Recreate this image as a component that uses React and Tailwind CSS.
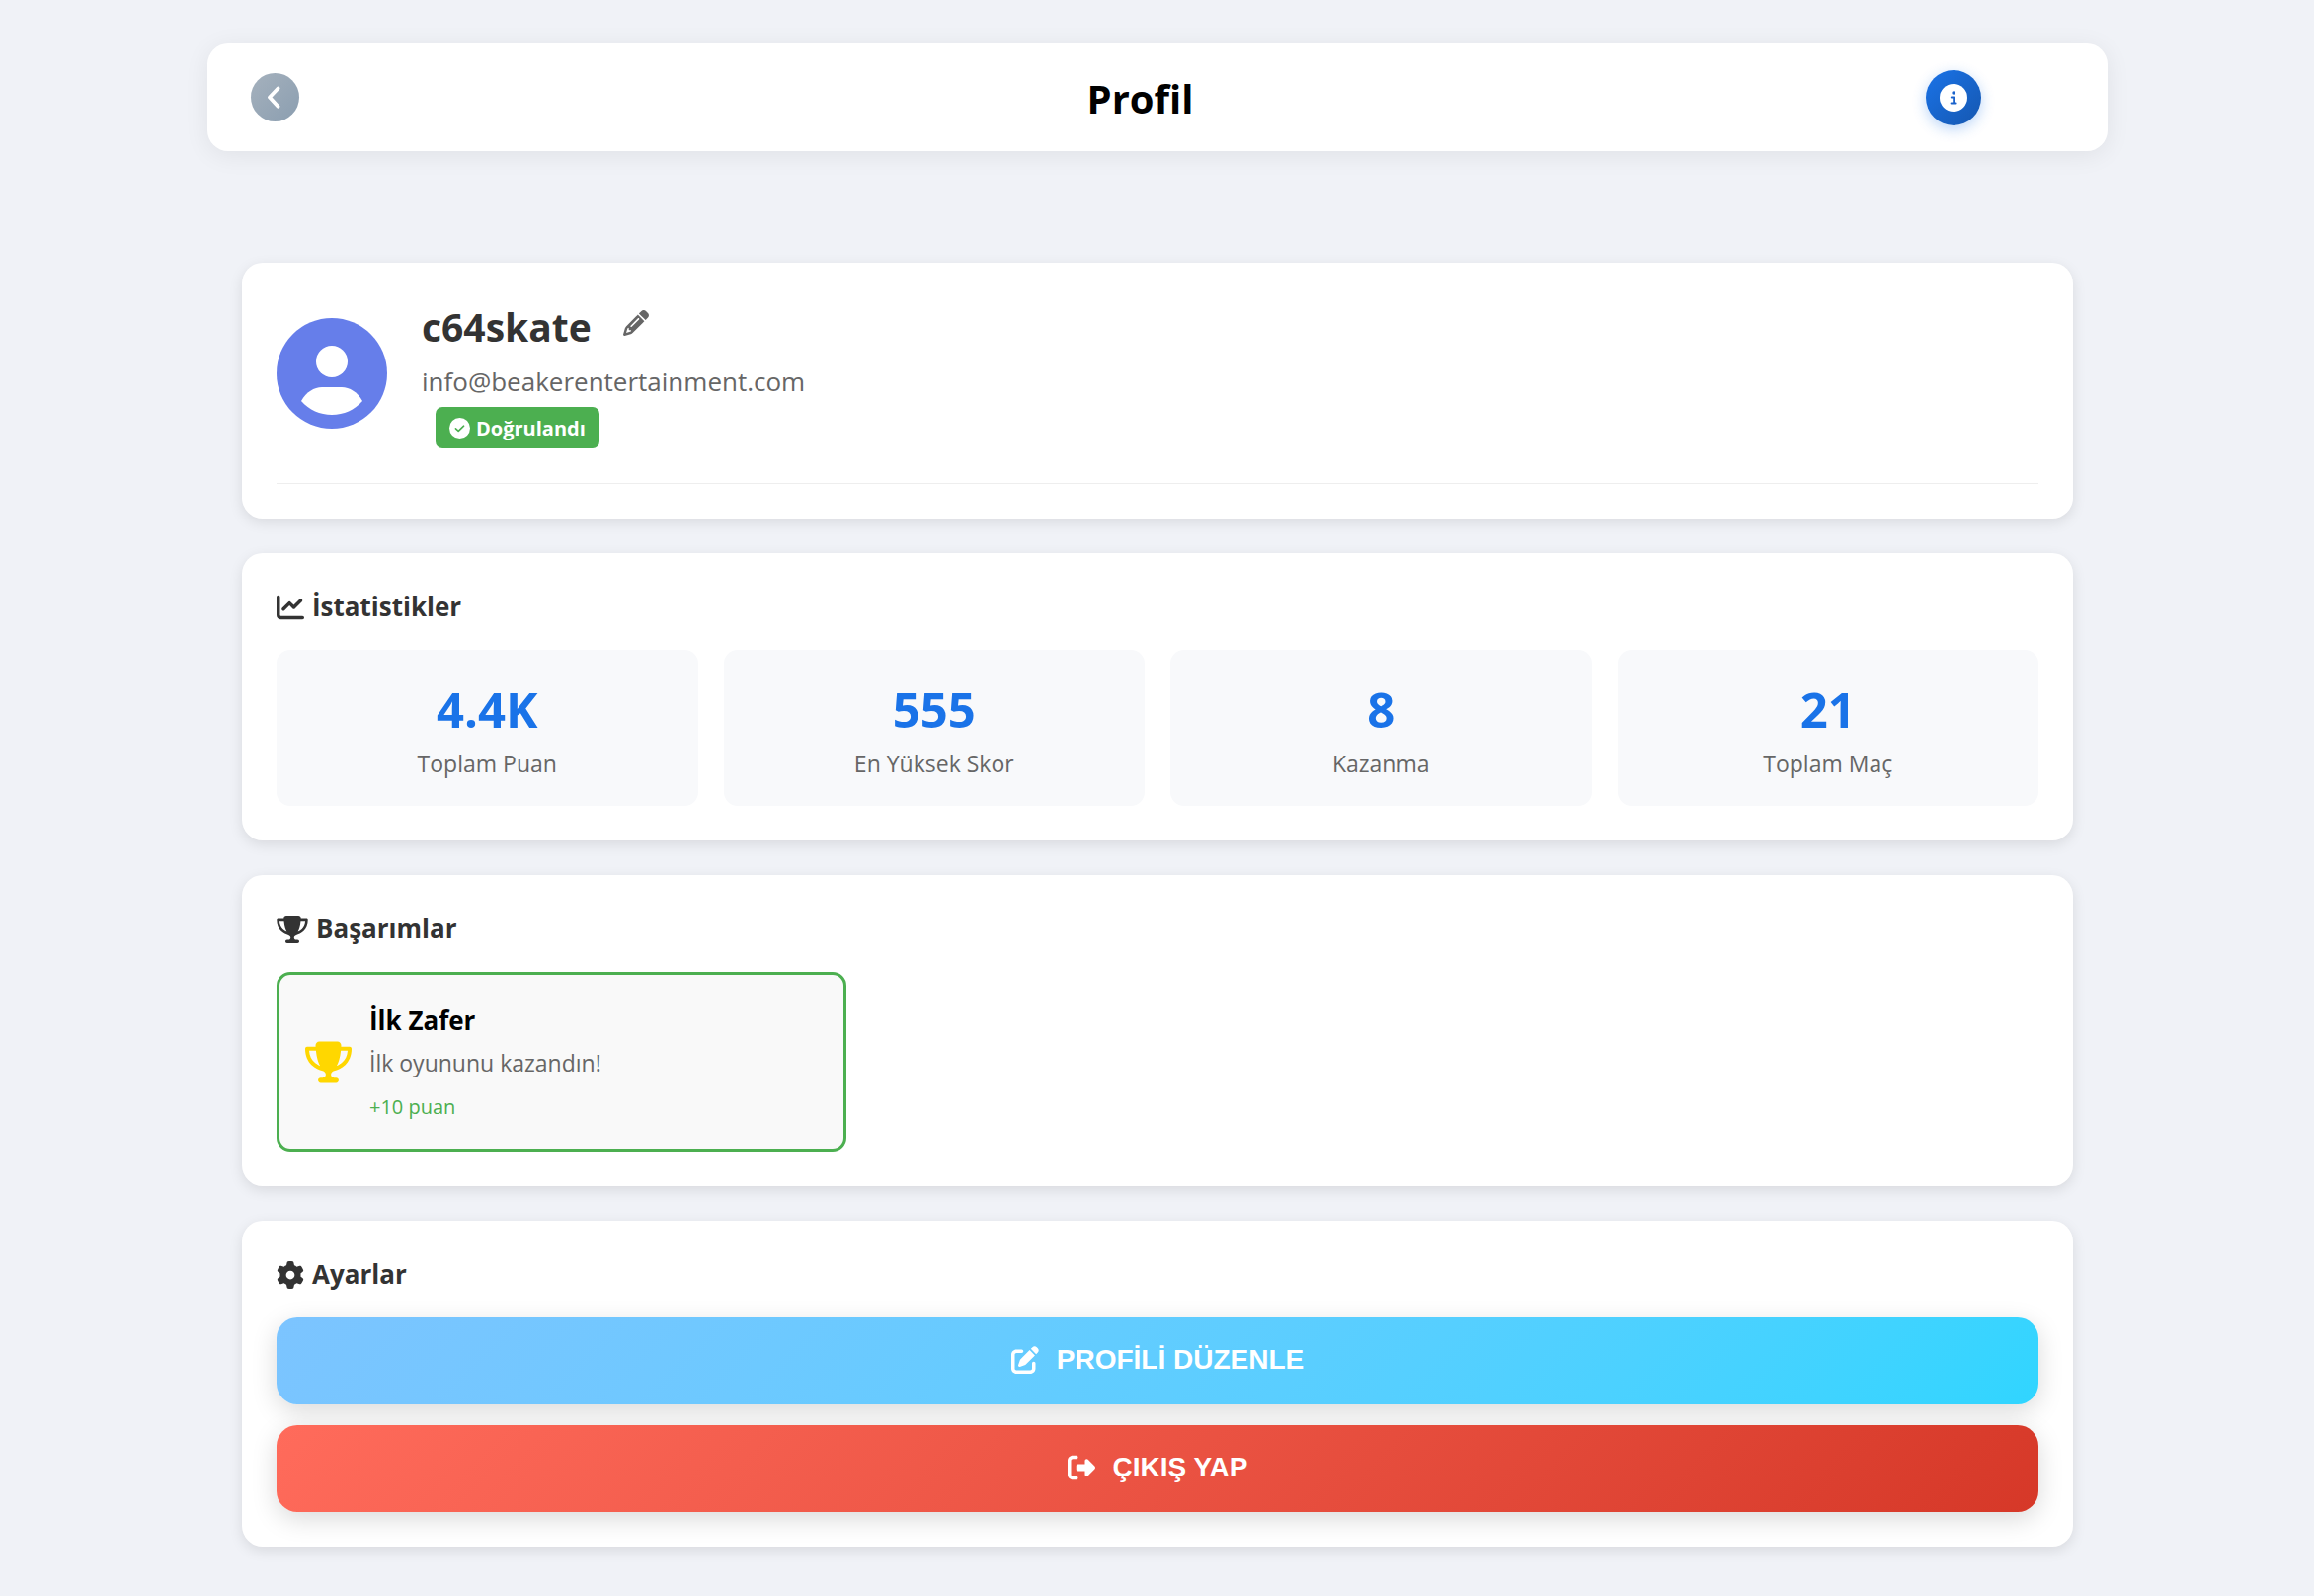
import {
  FaPencil,
  FaChartLine,
  FaTrophy,
  FaGear,
  FaPenToSquare,
  FaRightFromBracket,
} from 'react-icons/fa6';

const stats = [
  { value: '4.4K', label: 'Toplam Puan' },
  { value: '555', label: 'En Yüksek Skor' },
  { value: '8', label: 'Kazanma' },
  { value: '21', label: 'Toplam Maç' },
];

const achievements = [
  { id: 1, title: 'İlk Zafer', text: 'İlk oyununu kazandın!', points: '+10 puan' },
];

function Card({ children }) {
  return (
    <section className="rounded-[21px] bg-white p-[35px] shadow-[0_4px_14px_rgba(0,0,0,0.1)]">
      {children}
    </section>
  );
}

function CardTitle({ icon: Icon, iconWidth = 'w-7', children }) {
  return (
    <h2 className="mb-6 flex h-[39px] items-center gap-2 text-[26px] font-bold text-[#333]">
      <Icon className={`h-7 shrink-0 ${iconWidth}`} />
      <span>{children}</span>
    </h2>
  );
}

function BackIcon() {
  return (
    <svg viewBox="0 0 16 24" className="h-6 w-4" fill="none" stroke="currentColor" strokeWidth="3.8" strokeLinecap="round" strokeLinejoin="round" aria-hidden="true">
      <path d="M11.5 2.5 3 11.5 11.5 20.8" />
    </svg>
  );
}

function InfoIcon() {
  return (
    <svg viewBox="0 0 28 28" className="size-7" fill="none" aria-hidden="true">
      <circle cx="14" cy="14" r="14" fill="#fff" />
      <circle cx="14" cy="9" r="1.7" fill="#1a62cc" />
      <path d="M11.8 13.6h2.4v5.8M11.6 19.6h5" stroke="#1a62cc" strokeWidth="2" strokeLinecap="round" strokeLinejoin="round" />
    </svg>
  );
}

function CheckIcon() {
  return (
    <svg viewBox="0 0 21 21" className="size-[21px] shrink-0" fill="none" aria-hidden="true">
      <circle cx="10.5" cy="10.5" r="10.5" fill="#fff" />
      <path d="M6.4 10.8 9.2 13.4 14.6 8.2" stroke="#4caf50" strokeWidth="1.6" strokeLinecap="round" strokeLinejoin="round" />
    </svg>
  );
}

function Avatar() {
  return (
    <svg viewBox="0 0 112 112" className="size-28 shrink-0" aria-hidden="true">
      <circle cx="56" cy="56" r="56" fill="#667eea" />
      <circle cx="56" cy="44" r="16" fill="#fff" />
      <path d="M25 84C30 75 38 70 46 70H66C74 70 82 75 87 84C79 93 68 98 56 98S33 93 25 84Z" fill="#fff" />
    </svg>
  );
}

export default function App() {
  return (
    <div className="min-h-screen bg-[#f0f2f7] pt-11 pr-[209px] pb-12 pl-[210px] font-['Open_Sans','Noto_Sans',sans-serif]">
      {/* Header */}
      <header className="flex h-[109px] items-center justify-between rounded-[21px] bg-white px-11 shadow-[0_4px_26px_rgba(0,0,0,0.07)]">
        <div className="w-[105px]">
          <button
            type="button"
            aria-label="Geri"
            className="flex size-[49px] items-center justify-center rounded-full bg-linear-135 from-[#a5b1bd] to-[#8b9eb0] pr-0.5 text-white"
          >
            <BackIcon />
          </button>
        </div>
        <h1 className="pt-0.5 text-[40px] font-bold text-black">Profil</h1>
        <div className="w-[140px]">
          <button
            type="button"
            aria-label="Bilgi"
            className="flex size-14 items-center justify-center rounded-full bg-linear-135 from-[#1a73e8] to-[#1557b0] text-white shadow-[0_4px_14px_rgba(26,115,232,0.3)]"
          >
            <InfoIcon />
          </button>
        </div>
      </header>

      <main className="mt-[113px] flex flex-col gap-[35px] px-[35px]">
        {/* User */}
        <Card>
          <div className="flex items-center gap-[35px] border-b border-[#eee] pb-[35px]">
            <Avatar />
            <div className="flex flex-col items-start">
              <div className="flex h-[60px] items-center gap-8">
                <h2 className="text-[39px] font-bold text-[#333]">c64skate</h2>
                <button type="button" aria-label="Kullanıcı adını düzenle" className="mb-2 text-[#666]">
                  <FaPencil size={26} />
                </button>
              </div>
              <p className="text-[26px] leading-[50px] text-[#666]">info@beakerentertainment.com</p>
              <span className="mt-px ml-[14px] flex h-[42px] items-center gap-[6px] rounded-[7px] bg-[#4caf50] px-[14px] text-[20px] font-bold text-white">
                <CheckIcon />
                <span className="pt-0.5">Doğrulandı</span>
              </span>
            </div>
          </div>
        </Card>

        {/* Stats */}
        <Card>
          <CardTitle icon={FaChartLine}>İstatistikler</CardTitle>
          <div className="grid grid-cols-4 gap-[26px]">
            {stats.map(s => (
              <div key={s.label} className="flex h-[158px] flex-col items-center justify-center rounded-[14px] bg-[#f8f9fb] pt-2">
                <div className="text-[49px] leading-[64px] font-bold text-[#1a73e8]">{s.value}</div>
                <div className="text-[23px] leading-[46px] text-[#666]">{s.label}</div>
              </div>
            ))}
          </div>
        </Card>

        {/* Achievements */}
        <Card>
          <CardTitle icon={FaTrophy} iconWidth="w-8">Başarımlar</CardTitle>
          <div className="grid grid-cols-3 gap-[26px]">
            {achievements.map(a => (
              <div key={a.id} className="flex h-[182px] items-center gap-[18px] rounded-[14px] border-3 border-[#4caf50] bg-[#f9f9f9] px-[26px]">
                <FaTrophy size={47} className="shrink-0 text-[#ffd700]" />
                <div className="pt-1.5">
                  <h3 className="text-[26px] leading-[44px] font-bold text-black">{a.title}</h3>
                  <p className="text-[23px] leading-[42px] text-[#666]">{a.text}</p>
                  <p className="text-[20px] leading-[48px] text-[#4caf50]">{a.points}</p>
                </div>
              </div>
            ))}
          </div>
        </Card>

        {/* Settings */}
        <Card>
          <CardTitle icon={FaGear}>Ayarlar</CardTitle>
          <div className="flex flex-col gap-[21px] font-['Liberation_Sans',Arial,sans-serif] text-[28px] font-bold text-white">
            <button
              type="button"
              className="flex h-[88px] items-center justify-center gap-[18px] rounded-[21px] bg-linear-135 from-[#7cc4ff] to-[#30d5ff] pb-0.5 shadow-[0_7px_26px_rgba(0,0,0,0.15)]"
            >
              <FaPenToSquare size={28} />
              PROFİLİ DÜZENLE
            </button>
            <button
              type="button"
              className="flex h-[88px] items-center justify-center gap-[18px] rounded-[21px] bg-linear-135 from-[#ff6b5b] to-[#d63828] pb-0.5 shadow-[0_7px_26px_rgba(0,0,0,0.15)]"
            >
              <FaRightFromBracket size={28} />
              ÇIKIŞ YAP
            </button>
          </div>
        </Card>
      </main>
    </div>
  );
}
